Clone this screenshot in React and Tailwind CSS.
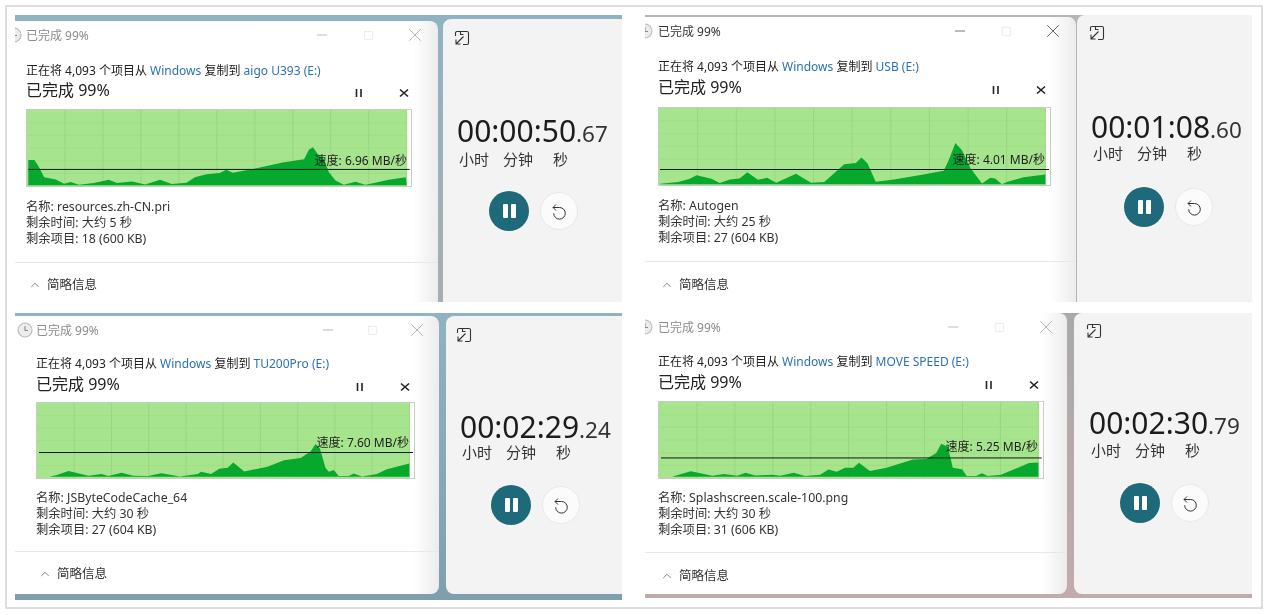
import { Minus, Square, X, ChevronUp } from 'lucide-react'

const font = "font-['Noto_Sans','Noto_Sans_CJK_SC',sans-serif]"

const panels = [
  {
    dest: 'aigo U393 (E:)', name: 'resources.zh-CN.pri', time: '大约 5 秒', left: '18 (600 KB)', speed: '6.96 MB/秒',
    clock: '00:00:50', ms: '67',
    cell: 'h-[287px] bg-gradient-to-b from-[#8fb3c2] to-[#a6aeb2]', titleColor: 'text-[#8c8c8c]', ctrlColor: 'text-[#9a9a9a]',
    dialog: 'mt-[6px] w-[423px] h-[281px]', pad: 'pl-[11px]', clockIcon: 'left-[-9px]',
    ctrlRow: 'w-[426px]', ctrls: 'gap-[31px]',
    l1: 'mt-[14px]', l2: '-mt-[1px]', chartMt: 'mt-[7px]', namesMt: 'mt-[12px]', divMt: 'mt-[15px]', foot: 'h-[44px]',
    chart: 'w-[386px] h-[78px]', vb: '78 328 1160 234', inner: 1225, avg: 511, avgFrom: 82, avgTo: 1234,
    speedPos: 'right-[4px] top-[43px]', actions: 'w-[385px]',
    points: '82,482 100,482 112,500 130,535 165,542 190,555 210,550 235,558 280,553 325,543 350,553 395,548 435,557 480,543 515,556 560,552 585,535 620,526 660,522 680,512 700,521 760,510 850,490 915,480 930,450 942,443 955,462 975,480 990,520 1010,545 1035,558 1070,549 1100,558 1130,552 1170,543 1222,535 1225,560 82,560',
    timer: 'mt-[4px] ml-[5px] h-[283px] rounded-tl-lg', tPad: 'pl-[14px]', icon: 'mt-[11px] -ml-[3px]', tMt: 'mt-[73px]', lMt: 'mt-[3px]', bMt: 'mt-[24px]', bPad: 'pl-[32px]',
  },
  {
    dest: 'USB (E:)', name: 'Autogen', time: '大约 25 秒', left: '27 (604 KB)', speed: '4.01 MB/秒',
    clock: '00:01:08', ms: '60',
    cell: 'h-[287px] bg-[#b5b5b5]', titleColor: 'text-[#333333]', ctrlColor: 'text-[#333333]',
    dialog: 'mt-[2px] w-[431px] h-[285px]', pad: 'pl-[13px]', clockIcon: 'left-[-8px]',
    ctrlRow: 'w-[434px]', ctrls: 'gap-[31px]',
    l1: 'mt-[14px]', l2: 'mt-0', chartMt: 'mt-[8px]', namesMt: 'mt-[12px]', divMt: 'mt-[15px]', foot: 'h-[46px]',
    chart: 'w-[393px] h-[79px]', vb: '52 320 1178 237', inner: 1216, avg: 509, avgFrom: 56, avgTo: 1228,
    speedPos: 'right-[5px] top-[44px]', actions: 'w-[390px]',
    points: '56,553 110,548 145,538 165,527 210,538 235,551 265,540 295,537 318,518 350,541 378,535 405,550 465,522 510,550 550,548 610,493 645,489 662,472 680,490 705,547 760,540 840,526 910,513 925,480 945,428 965,450 990,505 1025,552 1050,535 1065,537 1085,555 1100,548 1150,533 1216,525 1216,555 56,555',
    timer: 'ml-[1px] h-[287px] rounded-tl-lg', tPad: 'pl-[14px]', icon: 'mt-[10px] -ml-[2px]', tMt: 'mt-[74px]', lMt: 'mt-[1px]', bMt: 'mt-[26px]', bPad: 'pl-[33px]',
  },
  {
    dest: 'TU200Pro (E:)', name: 'JSByteCodeCache_64', time: '大约 30 秒', left: '27 (604 KB)', speed: '7.60 MB/秒',
    clock: '00:02:29', ms: '24',
    cell: 'h-[287px] bg-gradient-to-b from-[#8fb3c2] to-[#7f9fae]', titleColor: 'text-[#8c8c8c]', ctrlColor: 'text-[#9a9a9a]',
    dialog: 'mt-[3px] w-[424px] h-[278px] rounded-br-lg', pad: 'pl-[21px]', clockIcon: 'left-[2px]',
    ctrlRow: 'w-[428px]', ctrls: 'gap-[29px]',
    l1: 'mt-[12px]', l2: 'mt-0', chartMt: 'mt-[6px]', namesMt: 'mt-[11px]', divMt: 'mt-[13px]', foot: 'h-[44px]',
    chart: 'w-[379px] h-[77px]', vb: '105 290 1137 232', inner: 1228, avg: 442, avgFrom: 110, avgTo: 1238,
    speedPos: 'right-[5px] top-[32px]', actions: 'w-[376px]',
    points: '145,517 165,513 200,500 260,515 300,510 320,516 360,506 395,515 440,516 480,507 520,514 535,517 590,510 600,503 630,510 655,493 680,490 697,474 730,502 800,487 850,467 900,460 930,440 945,417 958,430 975,490 985,503 1000,497 1015,516 1045,516 1060,508 1085,517 1130,510 1160,495 1228,477 1228,518 145,518',
    timer: 'mt-[3px] ml-[7px] h-[278px] rounded-l-lg', tPad: 'pl-[14px]', icon: 'mt-[11px] -ml-[4px]', tMt: 'mt-[72px]', lMt: 'mt-0', bMt: 'mt-[25px]', bPad: 'pl-[31px]',
  },
  {
    dest: 'MOVE SPEED (E:)', name: 'Splashscreen.scale-100.png', time: '大约 30 秒', left: '31 (606 KB)', speed: '5.25 MB/秒',
    clock: '00:02:30', ms: '79',
    cell: 'h-[285px] bg-gradient-to-b from-[#a9a9a9] to-[#c2abab]', titleColor: 'text-[#8c8c8c]', ctrlColor: 'text-[#9a9a9a]',
    dialog: 'w-[422px] h-[281px] rounded-br-lg', pad: 'pl-[13px]', clockIcon: 'left-[-8px]',
    ctrlRow: 'w-[427px]', ctrls: 'gap-[31px]',
    l1: 'mt-[13px]', l2: 'mt-0', chartMt: 'mt-[7px]', namesMt: 'mt-[11px]', divMt: 'mt-[14px]', foot: 'h-[46px]',
    chart: 'w-[386px] h-[78px]', vb: '54 287 1158 235', inner: 1198, avg: 460, avgFrom: 60, avgTo: 1208,
    speedPos: 'right-[5px] top-[37px]', actions: 'w-[383px]',
    points: '95,517 150,501 215,515 250,510 290,515 315,506 345,514 395,512 420,515 460,506 495,516 540,512 565,496 590,503 615,490 640,490 657,475 690,500 740,490 820,465 860,463 890,445 905,416 925,425 940,490 968,495 982,516 1010,516 1028,507 1045,516 1085,512 1125,495 1170,476 1198,474 1198,518 95,518',
    timer: 'ml-[7px] h-[281px] rounded-l-lg', tPad: 'pl-[15px]', icon: 'mt-[10px] -ml-[3px]', tMt: 'mt-[72px]', lMt: 'mt-[2px]', bMt: 'mt-[25px]', bPad: 'pl-[31px]',
  },
]

function SpeedChart({ p }) {
  const [x, y, , h] = p.vb.split(' ').map(Number)
  const verticals = Array.from({ length: 10 }, (_, i) => x + (i + 1) * (p.inner - x) / 10)
  const horizontals = Array.from({ length: 5 }, (_, i) => y + (i + 1) * h / 6)
  return (
    <div className={`relative border border-[#c4cfc0] bg-white ${p.chart}`}>
      <svg className="block w-full h-full" viewBox={p.vb} preserveAspectRatio="none">
        <rect x={x} y={y} width={p.inner - x} height={h} fill="#a6e58d" />
        {verticals.map((vx) => (
          <line key={vx} x1={vx} y1={y} x2={vx} y2={y + h} stroke="#98d682" strokeWidth="3" />
        ))}
        {horizontals.map((hy) => (
          <line key={hy} x1={x} y1={hy} x2={p.inner} y2={hy} stroke="#9cdc85" strokeWidth="2" />
        ))}
        <polygon points={p.points} fill="#06a92e" strokeLinejoin="round" />
        <line x1={p.avgFrom} y1={p.avg} x2={p.avgTo} y2={p.avg} stroke="#101a10" strokeWidth="1" vectorEffect="non-scaling-stroke" shapeRendering="crispEdges" />
      </svg>
      <span className={`absolute text-[12px] leading-4 text-[#222222] whitespace-nowrap ${p.speedPos}`}>
        速度: {p.speed}
      </span>
    </div>
  )
}

function ClockIcon({ className }) {
  return (
    <svg className={className} width="16" height="16" viewBox="0 0 16 16">
      <circle cx="8" cy="8" r="7" fill="#ececec" stroke="#bdbdbd" strokeWidth="1.2" />
      <path d="M8 4v4.5h3" fill="none" stroke="#8a8a8a" strokeWidth="1.1" />
    </svg>
  )
}

function CopyDialog({ p }) {
  return (
    <div className={`relative overflow-hidden rounded-tr-lg bg-gradient-to-r from-white from-[94%] to-[#ececec] ${p.dialog}`}>
      <div className={`relative flex h-7 items-center ${p.pad}`}>
        <ClockIcon className={`absolute ${p.clockIcon}`} />
        <span className={`mt-[1px] text-[12px] ${p.titleColor}`}>已完成 99%</span>
        <div className={`absolute left-0 top-0 flex h-7 items-center justify-end pr-[15px] ${p.ctrlRow} ${p.ctrlColor} ${p.ctrls}`}>
          <Minus size={16} strokeWidth={1} />
          <Square size={11} strokeWidth={0.8} className="mx-[2px] text-[#c8c8c8]" />
          <X size={22} strokeWidth={0.8} className="-ml-[3px]" />
        </div>
      </div>
      <div className={p.pad}>
        <div className={`h-4 text-[12px] leading-4 text-[#222222] whitespace-nowrap ${p.l1}`}>
          正在将 4,093 个项目从 <span className="text-[#2a72b5]">Windows</span> 复制到 <span className="text-[#2a72b5]">{p.dest}</span>
        </div>
        <div className={`relative flex h-6 items-center justify-between ${p.actions} ${p.l2}`}>
          <span className="text-[16px] text-[#222222]">已完成 99%</span>
          <div className="mt-[5px] flex items-center gap-[33px] pr-[1px]">
            <svg width="12" height="12" viewBox="0 0 12 12"><path d="M3.5 2v8M8 2v8" stroke="#222" strokeWidth="1.6" /></svg>
            <svg width="12" height="12" viewBox="0 0 12 12"><path d="M2 2.5l8 7M10 2.5l-8 7" stroke="#222" strokeWidth="1.6" /></svg>
          </div>
        </div>
        <div className={p.chartMt}><SpeedChart p={p} /></div>
        <div className={`text-[12.3px] leading-4 text-[#333333] ${p.namesMt}`}>
          <div>名称: {p.name}</div>
          <div>剩余时间: {p.time}</div>
          <div>剩余项目: {p.left}</div>
        </div>
      </div>
      <div className={`border-t border-[#e8e8e8] ${p.divMt}`} />
      <div className={`flex items-center text-[12.5px] text-[#333333] ${p.foot} ${p.pad}`}>
        <ChevronUp size={14} strokeWidth={1} className="ml-[2px] mr-[5px]" />
        简略信息
      </div>
    </div>
  )
}

function ExpandIcon() {
  return (
    <svg width="16" height="16" viewBox="0 0 16 16" fill="none" stroke="#333" strokeWidth="1.1">
      <path d="M1.5 6V3a1.5 1.5 0 0 1 1.5-1.5h10A1.5 1.5 0 0 1 14.5 3v10a1.5 1.5 0 0 1-1.5 1.5H9" />
      <path d="M6.5 1.5v3h3M9.5 6.5L2 14M2 9.5V14h4.5" />
    </svg>
  )
}

function TimerPanel({ p }) {
  return (
    <div className={`flex-1 bg-[#f3f3f3] ${p.timer} ${p.tPad}`}>
      <div className={p.icon}><ExpandIcon /></div>
      <div className={`whitespace-nowrap leading-[24px] text-[#1c1c1c] ${p.tMt}`}>
        <span className="text-[30px]">{p.clock}</span>
        <span className="text-[22.5px] text-[#333333]">.{p.ms}</span>
      </div>
      <div className={`flex pl-[2px] text-[15px] leading-4 text-[#333333] ${p.lMt}`}>
        <span className="w-[44px]">小时</span>
        <span className="w-[50px]">分钟</span>
        <span>秒</span>
      </div>
      <div className={`flex items-center gap-[11px] ${p.bMt} ${p.bPad}`}>
        <div className="flex h-10 w-10 items-center justify-center gap-[3px] rounded-full bg-[#1e6a7b]">
          <span className="h-[14px] w-[5px] rounded-[1px] bg-white" />
          <span className="h-[14px] w-[5px] rounded-[1px] bg-white" />
        </div>
        <div className="flex h-[38px] w-[38px] items-center justify-center rounded-full border border-[#e9e9e9] bg-[#fbfbfb]">
          <svg width="18" height="18" viewBox="0 0 18 18" fill="none" stroke="#333" strokeWidth="1">
            <path d="M3 5.5h6.5a5.8 5.8 0 1 1-5.8 5.8" />
            <path d="M6 2.5l-3 3 3 3" />
          </svg>
        </div>
      </div>
    </div>
  )
}

export default function App() {
  return (
    <div className={`h-[615px] w-[1268px] overflow-hidden bg-white pl-[5px] pt-[5px] blur-[0.3px] ${font}`}>
      <div className="grid h-[604px] w-[1258px] grid-cols-[607px_607px] grid-rows-[287px_287px] items-start gap-x-[23px] gap-y-[11px] border-2 border-[#dedede] pl-[8px] pt-[8px]">
        {panels.map((p) => (
          <div key={p.dest} className={`flex items-start ${p.cell}`}>
            <CopyDialog p={p} />
            <TimerPanel p={p} />
          </div>
        ))}
      </div>
    </div>
  )
}
